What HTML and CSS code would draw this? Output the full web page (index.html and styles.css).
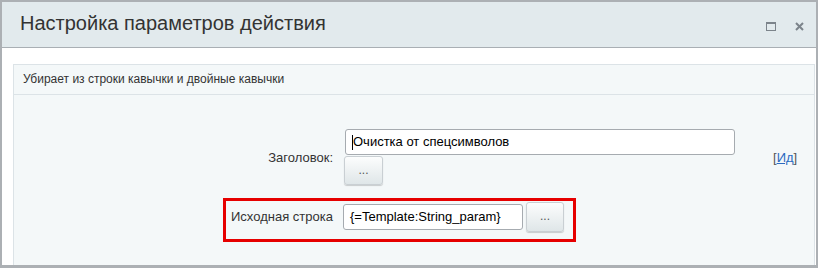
FILE: index.html
```html
<!DOCTYPE html>
<html lang="ru">
<head>
<meta charset="utf-8">
<title>Настройка параметров действия</title>
<link rel="stylesheet" href="styles.css">
</head>
<body>
<div class="dialog">
  <div class="head">
    <div class="title">Настройка параметров действия</div>
    <div class="head-icons">
      <span class="ico-max"></span>
      <svg class="ico-close" width="9" height="9" viewBox="0 0 9 9"><path d="M1 1L8 8M8 1L1 8" stroke="#7c848b" stroke-width="2"/></svg>
    </div>
  </div>
  <div class="body">
    <div class="panel">
      <div class="desc">Убирает из строки кавычки и двойные кавычки</div>
      <div class="form">
        <div class="row1">
          <div class="label1">Заголовок:</div>
          <div class="field1">
            <div class="input wide"><span class="caret"></span>Очистка от спецсимволов</div>
            <div class="btn">...</div>
          </div>
          <div class="idlink">[<a href="#">Ид</a>]</div>
        </div>
        <div class="hl">
          <div class="label2">Исходная строка</div>
          <div class="input narrow">{=Template:String_param}</div>
          <div class="btn btn2">...</div>
        </div>
      </div>
    </div>
  </div>
</div>
</body>
</html>
```
FILE: styles.css
```css
html, body { margin: 0; padding: 0; }
body {
  font-family: "Liberation Sans", Arial, sans-serif;
  color: #333;
  width: 818px;
  height: 268px;
  overflow: hidden;
  background: #fff;
}
.dialog {
  box-sizing: border-box;
  width: 818px;
  height: 268px;
  border: 2px solid #acb0b4;
  border-bottom-width: 3px;
  display: flex;
  flex-direction: column;
  overflow: hidden;
}
.head {
  height: 45px;
  background: #e2eaed;
  border-bottom: 1px solid #a9afb4;
  display: flex;
  align-items: center;
  justify-content: space-between;
  flex-shrink: 0;
}
.title {
  font-size: 20px;
  color: #333;
  padding-left: 18px;
  padding-bottom: 2px;
}
.head-icons {
  display: flex;
  align-items: center;
  gap: 19px;
  padding-right: 12px;
  padding-top: 4px;
}
.ico-max {
  box-sizing: border-box;
  width: 10px;
  height: 9px;
  border: 1px solid #7c848b;
  border-top-width: 2px;
}
.ico-close { display: block; }
.body {
  flex: 1;
  padding: 16px 1px 0 11px;
  display: flex;
  flex-direction: column;
}
.panel {
  flex: 1;
  background: #f4f8f9;
  border: 1px solid #dce3e7;
  border-bottom: none;
}
.desc {
  height: 29px;
  line-height: 29px;
  font-size: 12px;
  color: #333;
  padding-left: 9px;
  border-bottom: 1px solid #dce3e7;
}
.form {
  padding-top: 34px;
  font-size: 13px;
  color: #333;
}
.row1 {
  display: flex;
  align-items: center;
}
.label1 {
  width: 319px;
  text-align: right;
  padding-right: 12px;
  box-sizing: border-box;
  width: 331px;
}
.field1 {
  display: flex;
  flex-direction: column;
  gap: 1px;
}
.input {
  box-sizing: border-box;
  height: 26px;
  background: #fff;
  border: 1px solid #a6abb0;
  border-radius: 3px;
  padding: 0 6px;
  line-height: 24px;
  font-size: 13px;
  color: #000;
  white-space: nowrap;
  display: flex;
  align-items: center;
}
.wide { width: 390px; padding-left: 6px; }
.narrow { width: 180px; }
.caret {
  display: inline-block;
  width: 1px;
  height: 15px;
  background: #000;
  margin-right: 0;
}
.btn {
  box-sizing: border-box;
  width: 39px;
  height: 29px;
  border: 1px solid #c9cfd3;
  border-radius: 3px;
  background: linear-gradient(#fcfdfd, #dfe6e8);
  box-shadow: 0 1px 1px rgba(0,0,0,0.18);
  color: #555;
  font-size: 12px;
  display: flex;
  align-items: center;
  justify-content: center;
  padding-bottom: 2px;
  margin-left: -1px;
}
.idlink {
  margin-left: 38px;
  color: #555;
  font-size: 13px;
}
.idlink a { color: #2a6ac1; text-decoration: underline; }
.hl {
  margin-top: 13px;
  margin-left: 209px;
  box-sizing: border-box;
  width: 353px;
  height: 44px;
  border: 3px solid #e60000;
  padding: 0 0 7px 5px;
  display: flex;
  align-items: center;
}
.label2 {
  width: 112px;
  white-space: nowrap;
}
.btn2 {
  width: 38px;
  height: 30px;
  margin-left: 3px;
}
```
